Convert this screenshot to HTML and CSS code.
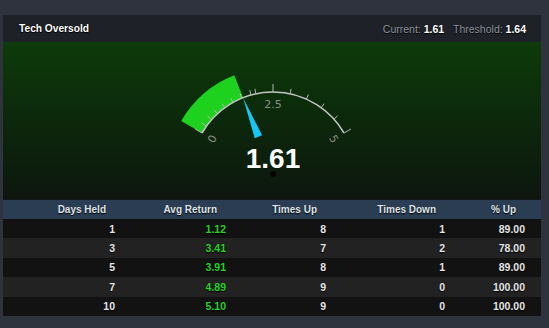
FILE: index.html
```html
<!DOCTYPE html>
<html>
<head>
<meta charset="utf-8">
<link rel="stylesheet" href="styles.css">
</head>
<body>
<div class="panel">
  <div class="head">
    <div class="title">Tech Oversold</div>
    <div class="stats">
      <span class="lbl">Current:</span> <b>1.61</b>
      <span class="lbl gap">Threshold:</span> <b>1.64</b>
    </div>
  </div>
  <div class="gauge-area">
    <svg class="gauge" width="220" height="157" viewBox="0 0 220 157">
      <path d="M 18.2 79 A 106 106 0 0 1 71.3 33.3 L 80.1 55.7 A 82 82 0 0 0 39 91 Z" fill="#1fd11f"/>
      <path d="M 39 91 A 82 82 0 0 1 181 91" fill="none" stroke="#c4c6c4" stroke-width="1.5"/>
      <g stroke="#b4b8b4" stroke-width="1">
        <line x1="39" y1="91" x2="32.1" y2="87"/>
        <line x1="42.9" y1="83.8" x2="38.6" y2="80.9"/>
        <line x1="48.1" y1="77.1" x2="44.4" y2="73.8"/>
        <line x1="54.4" y1="71.7" x2="51.0" y2="68.1"/>
        <line x1="61.8" y1="65.7" x2="58.9" y2="61.7"/>
        <line x1="70.0" y1="60.5" x2="67.6" y2="56.1"/>
        <line x1="78.9" y1="56.2" x2="77.0" y2="51.6"/>
        <line x1="88.0" y1="53.0" x2="86.7" y2="48.2"/>
        <line x1="92.9" y1="51.8" x2="91.9" y2="46.9"/>
        <line x1="110" y1="50" x2="110" y2="42"/>
        <line x1="127.1" y1="51.8" x2="128.1" y2="46.9"/>
        <line x1="143.4" y1="57.1" x2="145.4" y2="52.5"/>
        <line x1="158.2" y1="65.7" x2="161.1" y2="61.7"/>
        <line x1="170.9" y1="77.1" x2="174.6" y2="73.8"/>
        <line x1="181" y1="91" x2="187.9" y2="87"/>
      </g>
      <g class="tick-lbl">
        <text x="49.4" y="97" transform="rotate(-60 49.4 97)">0</text>
        <text x="110" y="62">2.5</text>
        <text x="170.6" y="97" transform="rotate(60 170.6 97)">5</text>
      </g>
      <polygon points="80.1,55.7 99.1,93.3 91.7,96.3" fill="#18c6f2"/>
      <circle cx="110" cy="132" r="3" fill="#050505"/>
      <text class="value" x="110" y="126">1.61</text>
    </svg>
  </div>
  <div class="table">
    <div class="row th">
      <div>Days Held</div><div>Avg Return</div><div>Times Up</div><div>Times Down</div><div>% Up</div>
    </div>
    <div class="row">
      <div>1</div><div class="pos">1.12</div><div>8</div><div>1</div><div>89.00</div>
    </div>
    <div class="row alt">
      <div>3</div><div class="pos">3.41</div><div>7</div><div>2</div><div>78.00</div>
    </div>
    <div class="row">
      <div>5</div><div class="pos">3.91</div><div>8</div><div>1</div><div>89.00</div>
    </div>
    <div class="row alt">
      <div>7</div><div class="pos">4.89</div><div>9</div><div>0</div><div>100.00</div>
    </div>
    <div class="row">
      <div>10</div><div class="pos">5.10</div><div>9</div><div>0</div><div>100.00</div>
    </div>
  </div>
</div>
</body>
</html>
```

FILE: styles.css
```css
html, body {
  margin: 0;
  padding: 0;
  background: #2e333d;
}
body {
  font-family: "Liberation Sans", Arial, sans-serif;
  font-size: 11px;
  width: 549px;
  height: 328px;
  overflow: hidden;
}
.panel {
  margin: 15px 0 0 3px;
  width: 538px;
}
.head {
  height: 27px;
  background: #1e2128;
  display: flex;
  align-items: center;
  justify-content: space-between;
  padding: 0 15px 0 16px;
}
.title {
  color: #fff;
  font-size: 10.2px;
  font-weight: bold;
  text-shadow: 0 1px 1px #000, 0 0 1px #000;
}
.stats {
  color: #fff;
  font-size: 10.5px;
  text-shadow: 0 1px 1px #000;
}
.stats .lbl {
  color: #8c939e;
}
.stats .gap {
  margin-left: 6px;
}
.gauge-area {
  height: 157px;
  background: linear-gradient(to bottom, #0d3b0a 0%, #0c2a0b 45%, #0d160e 100%);
  display: flex;
  justify-content: center;
}
.gauge {
  display: block;
  margin-left: 1px;
}
.tick-lbl text {
  fill: #8a8f8a;
  font-family: "DejaVu Sans", sans-serif;
  font-size: 11px;
  text-anchor: middle;
  dominant-baseline: central;
}
.value {
  fill: #fff;
  font-family: "Liberation Sans", Arial, sans-serif;
  font-weight: bold;
  font-size: 28px;
  text-anchor: middle;
}
.table {
  border-top: 1px solid #14171c;
}
.row {
  display: grid;
  grid-template-columns: 128px 111px 100px 119px 80px;
  height: 19.4px;
  align-items: center;
  background: #121212;
  color: #e6e6e6;
  font-size: 10.5px;
  font-weight: bold;
  text-shadow: 0 1px 1px #000;
}
.row.alt {
  background: #222222;
}
.row > div {
  text-align: right;
  padding-right: 16px;
}
.row.th {
  height: 19px;
  font-size: 10px;
  background: #2a3d53;
  color: #dfe4ea;
}
.row.th > div {
  padding-right: 25px;
}
.pos {
  color: #26d326;
}
```
